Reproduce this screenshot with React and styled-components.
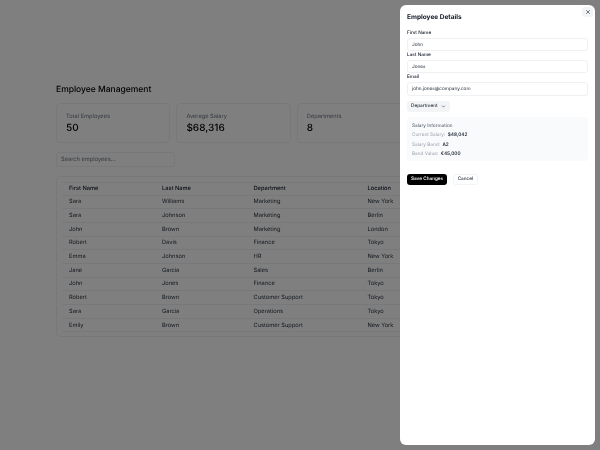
import React from 'react';
import styled, { createGlobalStyle } from 'styled-components';
import { X, ChevronDown } from 'lucide-react';

const employees = [
  ['Sara', 'Williams', 'Marketing', 'New York'],
  ['Sara', 'Johnson', 'Marketing', 'Berlin'],
  ['John', 'Brown', 'Marketing', 'London'],
  ['Robert', 'Davis', 'Finance', 'Tokyo'],
  ['Emma', 'Johnson', 'HR', 'New York'],
  ['Jane', 'Garcia', 'Sales', 'Berlin'],
  ['John', 'Jones', 'Finance', 'Tokyo'],
  ['Robert', 'Brown', 'Customer Support', 'Tokyo'],
  ['Sara', 'Garcia', 'Operations', 'Tokyo'],
  ['Emily', 'Brown', 'Customer Support', 'New York'],
];

const GlobalStyles = createGlobalStyle`
  html, body {
    margin: 0;
    height: 100%;
    overflow: hidden;
    background: #fff;
    font-family: Inter, "Liberation Sans", sans-serif;
    color: #111827;
    text-rendering: geometricPrecision;
  }
  * { box-sizing: border-box; }
  input, button { text-rendering: geometricPrecision; }
`;

const Page = styled.main`
  width: 600px;
  height: 450px;
  padding: 82px 56px 0;
  will-change: transform;
`;

const Title = styled.h1`
  margin: 0 0 7px;
  height: 14px;
  line-height: 16px;
  font-size: 8.5px;
  font-weight: 500;
  color: #000;
`;

const Stats = styled.div`
  display: grid;
  grid-template-columns: repeat(4, 114.4px);
  gap: 6px;
  margin-bottom: 9px;
`;

const StatCard = styled.div`
  height: 40px;
  padding: 9px;
  border: 1px solid #eff0f2;
  border-radius: 4px;
`;

const StatLabel = styled.div`
  font-size: 5.7px;
  line-height: 8px;
  color: #6b7280;
`;

const StatValue = styled.div`
  font-size: 10px;
  line-height: 13px;
  font-weight: 500;
  margin-top: 1px;
  color: #000;
`;

const Search = styled.input`
  display: block;
  width: 119px;
  height: 15px;
  padding: 0 4px;
  margin-bottom: 9px;
  border: 1px solid #eff0f2;
  border-radius: 3px;
  background: transparent;
  font: 400 5.7px Inter, sans-serif;
  &::placeholder { color: #6b7280; opacity: 1; }
`;

const TableCard = styled.div`
  width: 488px;
  height: 161px;
  padding: 5px;
  border: 1px solid #eff0f2;
  border-radius: 4px;
`;

const Table = styled.table`
  width: 100%;
  border-collapse: collapse;
  table-layout: fixed;
  font-size: 5.7px;
`;

const HeadCell = styled.th`
  height: 12.5px;
  padding: 0 0 0 7px;
  border-top: 1px solid #eff0f2;
  border-bottom: 1px solid #eff0f2;
  text-align: left;
  font-weight: 500;
`;

const Cell = styled.td`
  height: 13.7px;
  padding: 0 0 0 7px;
  border-bottom: 1px solid #eff0f2;
  color: #1f2937;
`;

const Overlay = styled.div`
  position: fixed;
  inset: 0;
  background: rgba(0, 0, 0, 0.5);
`;

const Drawer = styled.aside`
  position: fixed;
  top: 5px;
  right: 5px;
  bottom: 5px;
  width: 195px;
  padding: 7px;
  background: #fff;
  border-radius: 6px;
  display: flex;
  flex-direction: column;
  will-change: transform;
`;

const CloseButton = styled.button`
  position: absolute;
  top: 2px;
  right: 2px;
  width: 11px;
  height: 10px;
  padding: 0;
  border: none;
  border-radius: 3px;
  background: #f3f4f6;
  color: #1f2937;
  display: flex;
  align-items: center;
  justify-content: center;
`;

const DrawerTitle = styled.h2`
  margin: 0.5px 0 7.5px;
  height: 9px;
  line-height: 9px;
  font-size: 6.5px;
  font-weight: 700;
`;

const FieldLabel = styled.label`
  display: block;
  height: 6px;
  margin-bottom: 2.9px;
  line-height: 9px;
  font-size: 4.7px;
  font-weight: 500;
`;

const FieldInput = styled.input`
  display: block;
  flex: none;
  width: 100%;
  height: 13.3px;
  padding: 0 4px;
  border: 1px solid #eff0f2;
  border-radius: 3px;
  background: #fff;
  color: #1f2937;
  font: 400 4.7px Inter, sans-serif;
`;

const SelectButton = styled.button`
  align-self: flex-start;
  display: flex;
  align-items: center;
  gap: 3.5px;
  height: 11px;
  margin-top: 5px;
  padding: 0 4px;
  border: none;
  border-radius: 3px;
  background: #f3f4f6;
  color: #1f2937;
  font: 500 4.7px Inter, sans-serif;
  white-space: nowrap;
`;

const SalaryPanel = styled.section`
  margin-top: 5px;
  height: 44px;
  padding: 5px;
  border-radius: 3px;
  background: #f9fafb;
`;

const SalaryTitle = styled.div`
  font-size: 4.7px;
  line-height: 8px;
  color: #4b5563;
  margin-bottom: 1px;
`;

const SalaryRow = styled.div`
  display: flex;
  gap: 2.5px;
  height: 9.3px;
  align-items: center;
  font-size: 4.7px;
`;

const SalaryKey = styled.span`
  color: #9ca3af;
`;

const SalaryValue = styled.span`
  font-weight: 600;
  color: #1f2937;
`;

const Actions = styled.div`
  display: flex;
  gap: 5.5px;
  margin-top: 13px;
`;

const PrimaryButton = styled.button`
  height: 11px;
  padding: 0 4px;
  border: none;
  border-radius: 3px;
  background: #000;
  color: #fff;
  font: 500 4.7px Inter, sans-serif;
`;

const SecondaryButton = styled.button`
  height: 11px;
  padding: 0 4px;
  border: 1px solid #f3f4f6;
  border-radius: 3px;
  background: #fff;
  color: #1f2937;
  font: 500 4.7px Inter, sans-serif;
`;

const App = () => {
  return (
    <>
      <GlobalStyles />
      <Page>
        <Title>Employee Management</Title>
        <Stats>
          <StatCard>
            <StatLabel>Total Employees</StatLabel>
            <StatValue>50</StatValue>
          </StatCard>
          <StatCard>
            <StatLabel>Average Salary</StatLabel>
            <StatValue>$68,316</StatValue>
          </StatCard>
          <StatCard>
            <StatLabel>Departments</StatLabel>
            <StatValue>8</StatValue>
          </StatCard>
          <StatCard />
        </Stats>
        <Search placeholder="Search employees..." />
        <TableCard>
          <Table>
            <colgroup>
              <col style={{ width: 93 }} />
              <col style={{ width: 91.5 }} />
              <col style={{ width: 114 }} />
              <col />
            </colgroup>
            <thead>
              <tr>
                <HeadCell>First Name</HeadCell>
                <HeadCell>Last Name</HeadCell>
                <HeadCell>Department</HeadCell>
                <HeadCell>Location</HeadCell>
              </tr>
            </thead>
            <tbody>
              {employees.map((row, i) => (
                <tr key={i}>
                  {row.map((value, j) => (
                    <Cell key={j}>{value}</Cell>
                  ))}
                </tr>
              ))}
            </tbody>
          </Table>
        </TableCard>
      </Page>
      <Overlay />
      <Drawer>
        <CloseButton aria-label="Close">
          <X size={6} strokeWidth={2.5} />
        </CloseButton>
        <DrawerTitle>Employee Details</DrawerTitle>
        <FieldLabel>First Name</FieldLabel>
        <FieldInput defaultValue="John" />
        <FieldLabel>Last Name</FieldLabel>
        <FieldInput defaultValue="Jones" />
        <FieldLabel>Email</FieldLabel>
        <FieldInput defaultValue="john.jones@company.com" />
        <SelectButton>
          Department
          <ChevronDown size={5} strokeWidth={2.5} />
        </SelectButton>
        <SalaryPanel>
          <SalaryTitle>Salary Information</SalaryTitle>
          <SalaryRow>
            <SalaryKey>Current Salary:</SalaryKey>
            <SalaryValue>$48,042</SalaryValue>
          </SalaryRow>
          <SalaryRow>
            <SalaryKey>Salary Band:</SalaryKey>
            <SalaryValue>A2</SalaryValue>
          </SalaryRow>
          <SalaryRow>
            <SalaryKey>Band Value:</SalaryKey>
            <SalaryValue>€45,000</SalaryValue>
          </SalaryRow>
        </SalaryPanel>
        <Actions>
          <PrimaryButton>Save Changes</PrimaryButton>
          <SecondaryButton>Cancel</SecondaryButton>
        </Actions>
      </Drawer>
    </>
  );
};

export default App;
